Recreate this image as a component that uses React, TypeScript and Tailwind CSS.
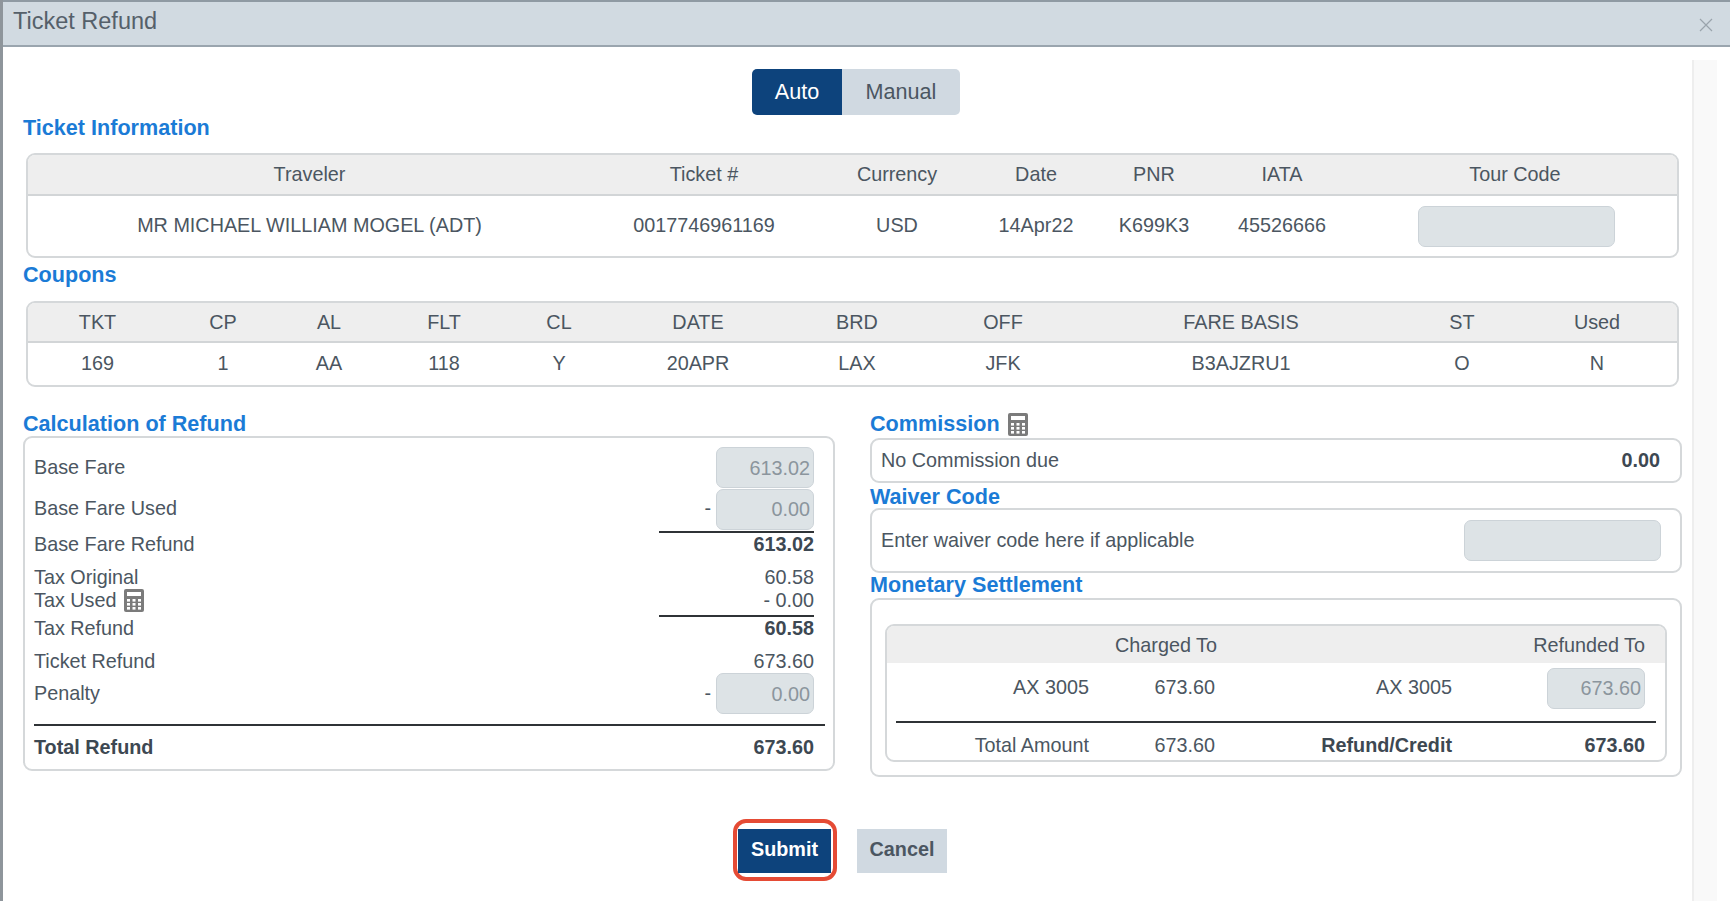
const F = "font-['Liberation_Sans',Arial,sans-serif]";

function CalcIcon() {
  return (
    <svg width="20" height="23" viewBox="0 0 20 23" className="shrink-0">
      <rect x="0" y="0" width="20" height="23" rx="2" fill="#7b7b7b" />
      <rect x="3" y="3" width="14" height="4" fill="#ffffff" />
      {[10, 14, 18].map((y) =>
        [3, 8.5, 14].map((x) => <rect key={`${x}-${y}`} x={x} y={y} width="3" height="2.6" fill="#ffffff" />)
      )}
    </svg>
  );
}

function Heading({ children }: { children: React.ReactNode }) {
  return <div className="flex h-[24px] items-center gap-[8px] pt-[2px] text-[21.6px] font-bold leading-[24px] text-[#1b7bd6]">{children}</div>;
}

function AmountInput({ value }: { value?: string }) {
  return (
    <input
      readOnly
      value={value ?? ""}
      className="h-[41px] w-[98px] rounded-[7px] border border-[#ccd3d8] bg-[#dde3e6] pr-[3px] pt-[1px] text-right text-[19.8px] text-[#8b959d] outline-none"
    />
  );
}

function CalcRow({ label, value, bold, className }: { label: React.ReactNode; value: React.ReactNode; bold?: boolean; className: string }) {
  return (
    <div className={`flex items-center justify-between ${bold ? "font-bold text-[#3d4852]" : ""} ${className}`}>
      <div className="flex items-center gap-[8px]">{label}</div>
      <div className="flex items-center">{value}</div>
    </div>
  );
}

const ticketCols = ["Traveler", "Ticket #", "Currency", "Date", "PNR", "IATA"];
const ticketVals = ["MR MICHAEL WILLIAM MOGEL (ADT)", "0017746961169", "USD", "14Apr22", "K699K3", "45526666"];
const couponCols = ["TKT", "CP", "AL", "FLT", "CL", "DATE", "BRD", "OFF", "FARE BASIS", "ST", "Used"];
const couponVals = ["169", "1", "AA", "118", "Y", "20APR", "LAX", "JFK", "B3AJZRU1", "O", "N"];

export default function App() {
  return (
    <div className={`${F} flex h-[901px] w-[1730px] flex-col overflow-hidden border-l-[3px] border-[#8e959b] bg-white text-[19.8px] text-[#4b5661]`}>
      <div className="flex h-[47px] shrink-0 items-center justify-between border-y-2 border-t-[#8f9aa3] border-b-[#9aa5ae] bg-[#d1dae1] pb-[4px] pl-[10px] pr-[17px]">
        <span className="text-[23.5px] text-[#55606a]">Ticket Refund</span>
        <svg width="14" height="14" viewBox="0 0 14 14" className="mt-[6px]">
          <path d="M1 1 L13 13 M13 1 L1 13" stroke="#9aa4ac" strokeWidth="1.2" fill="none" />
        </svg>
      </div>

      <div className="flex min-h-0 flex-1">
        <div className="w-[1689px] shrink-0 pl-[20px]">
          <div className="ml-[729px] mt-[22px] flex h-[46px] w-[208px] overflow-hidden rounded-[5px] text-[21.6px]">
            <div className="flex w-[90px] items-center justify-center bg-[#0d437c] text-white">Auto</div>
            <div className="flex flex-1 items-center justify-center bg-[#d0d9e1]">Manual</div>
          </div>

          <Heading>Ticket Information</Heading>
          <div className="ml-[3px] mt-[14px] h-[105px] w-[1653px] overflow-hidden rounded-[9px] border-2 border-[#d5d8da]">
            <div className="grid h-[41px] grid-cols-[563px_226px_160px_118px_118px_138px_1fr] items-center border-b-2 border-[#d2d5d7] bg-[#eeeeee] text-center">
              {ticketCols.map((c) => (
                <div key={c}>{c}</div>
              ))}
              <div className="pl-[2px]">Tour Code</div>
            </div>
            <div className="grid h-[60px] grid-cols-[563px_226px_160px_118px_118px_138px_1fr] items-center text-center">
              {ticketVals.map((c) => (
                <div key={c}>{c}</div>
              ))}
              <div className="flex justify-center pl-[4px]">
                <input readOnly className="h-[41px] w-[197px] rounded-[7px] border border-[#ccd3d8] bg-[#dde3e6] outline-none" />
              </div>
            </div>
          </div>

          <div className="mt-[4px]">
            <Heading>Coupons</Heading>
          </div>
          <div className="ml-[3px] mt-[15px] h-[86px] w-[1653px] overflow-hidden rounded-[9px] border-2 border-[#d5d8da]">
            <div className="grid h-[40px] grid-cols-[139px_112px_100px_130px_100px_178px_140px_152px_324px_118px_1fr] items-center border-b-2 border-[#d2d5d7] bg-[#eeeeee] pr-[4px] pt-[2px] text-center">
              {couponCols.map((c) => (
                <div key={c}>{c}</div>
              ))}
            </div>
            <div className="grid h-[42px] grid-cols-[139px_112px_100px_130px_100px_178px_140px_152px_324px_118px_1fr] items-center pr-[4px] text-center">
              {couponVals.map((c) => (
                <div key={c}>{c}</div>
              ))}
            </div>
          </div>

          <div className="mt-[24px] flex items-start justify-between">
            <div className="w-[812px] shrink-0">
              <Heading>Calculation of Refund</Heading>
              <div className="mt-[1px] h-[335px] rounded-[9px] border-2 border-[#d5d8da] pl-[9px] pr-[8px] pt-[9px]">
                <div className="pr-[11px]">
                  <CalcRow className="h-[41px]" label="Base Fare" value={<AmountInput value="613.02" />} />
                  <CalcRow
                    className="h-[42px]"
                    label="Base Fare Used"
                    value={
                      <>
                        <span className="mr-[5px]">-</span>
                        <AmountInput value="0.00" />
                      </>
                    }
                  />
                  <div className="ml-auto mt-[1px] h-[2px] w-[155px] bg-[#2f3336]" />
                  <CalcRow className="h-[23px]" label="Base Fare Refund" value={<span className="font-bold text-[#3d4852]">613.02</span>} />
                  <CalcRow className="mt-[10px] h-[23px]" label="Tax Original" value="60.58" />
                  <CalcRow
                    className="h-[23px]"
                    label={
                      <>
                        Tax Used
                        <CalcIcon />
                      </>
                    }
                    value="- 0.00"
                  />
                  <div className="ml-auto mt-[3px] h-[2px] w-[155px] bg-[#2f3336]" />
                  <CalcRow className="h-[23px]" label="Tax Refund" value={<span className="font-bold text-[#3d4852]">60.58</span>} />
                  <CalcRow className="mt-[11px] h-[22px]" label="Ticket Refund" value="673.60" />
                  <CalcRow
                    className="h-[41px]"
                    label="Penalty"
                    value={
                      <>
                        <span className="mr-[5px]">-</span>
                        <AmountInput value="0.00" />
                      </>
                    }
                  />
                </div>
                <div className="mt-[10px] h-[2px] bg-[#2f3336]" />
                <CalcRow bold className="mt-[10px] h-[23px] pr-[11px]" label="Total Refund" value="673.60" />
              </div>
            </div>

            <div className="mr-[10px] w-[812px] shrink-0">
              <Heading>
                Commission
                <CalcIcon />
              </Heading>
              <div className="mt-[3px] flex h-[45px] items-center justify-between rounded-[9px] border-2 border-[#d5d8da] pl-[9px] pr-[20px]">
                <span>No Commission due</span>
                <span className="font-bold text-[#3d4852]">0.00</span>
              </div>
              <div className="mt-[1px]">
                <Heading>Waiver Code</Heading>
              </div>
              <div className="flex h-[65px] items-center justify-between rounded-[9px] border-2 border-[#d5d8da] pl-[9px] pr-[19px]">
                <span>Enter waiver code here if applicable</span>
                <input readOnly className="h-[41px] w-[197px] rounded-[7px] border border-[#ccd3d8] bg-[#dde3e6] outline-none" />
              </div>
              <div className="h-[25px] -translate-y-[1px]">
                <Heading>Monetary Settlement</Heading>
              </div>
              <div className="h-[179px] rounded-[9px] border-2 border-[#d5d8da] px-[13px] pt-[24px]">
                <div className="h-[138px] overflow-hidden rounded-[9px] border-2 border-[#d5d8da]">
                  <div className="grid h-[37px] grid-cols-[202px_126px_237px_1fr] items-center bg-[#eeeeee] pr-[20px] pt-[2px] text-right">
                    <div />
                    <div className="-mr-[2px] whitespace-nowrap">Charged To</div>
                    <div />
                    <div>Refunded To</div>
                  </div>
                  <div className="grid h-[50px] grid-cols-[202px_126px_237px_1fr] items-center pr-[20px] text-right">
                    <div>AX 3005</div>
                    <div>673.60</div>
                    <div>AX 3005</div>
                    <div className="flex justify-end">
                      <AmountInput value="673.60" />
                    </div>
                  </div>
                  <div className="ml-[9px] mt-[8px] h-[2px] w-[760px] bg-[#2f3336]" />
                  <div className="mt-[8px] grid h-[23px] grid-cols-[202px_126px_237px_1fr] items-center pr-[20px] text-right">
                    <div>Total Amount</div>
                    <div>673.60</div>
                    <div className="font-bold text-[#3d4852]">Refund/Credit</div>
                    <div className="font-bold text-[#3d4852]">673.60</div>
                  </div>
                </div>
              </div>
            </div>
          </div>

          <div className="ml-[710px] mt-[42px] flex items-start">
            <div className="h-[62px] w-[104px] rounded-[13px] border-4 border-[#e54b35] pl-[1px] pt-[6px]">
              <button className="h-[44px] w-[93px] bg-[#0d437c] pb-[2px] font-bold text-white">Submit</button>
            </div>
            <button className="ml-[20px] mt-[10px] h-[44px] w-[90px] bg-[#d0d9e1] pb-[2px] font-bold">Cancel</button>
          </div>
        </div>
        <div className="mt-[13px] w-[25px] shrink-0 border-l-2 border-[#eeeeee] bg-[#f9f9f9]" />
      </div>
    </div>
  );
}
